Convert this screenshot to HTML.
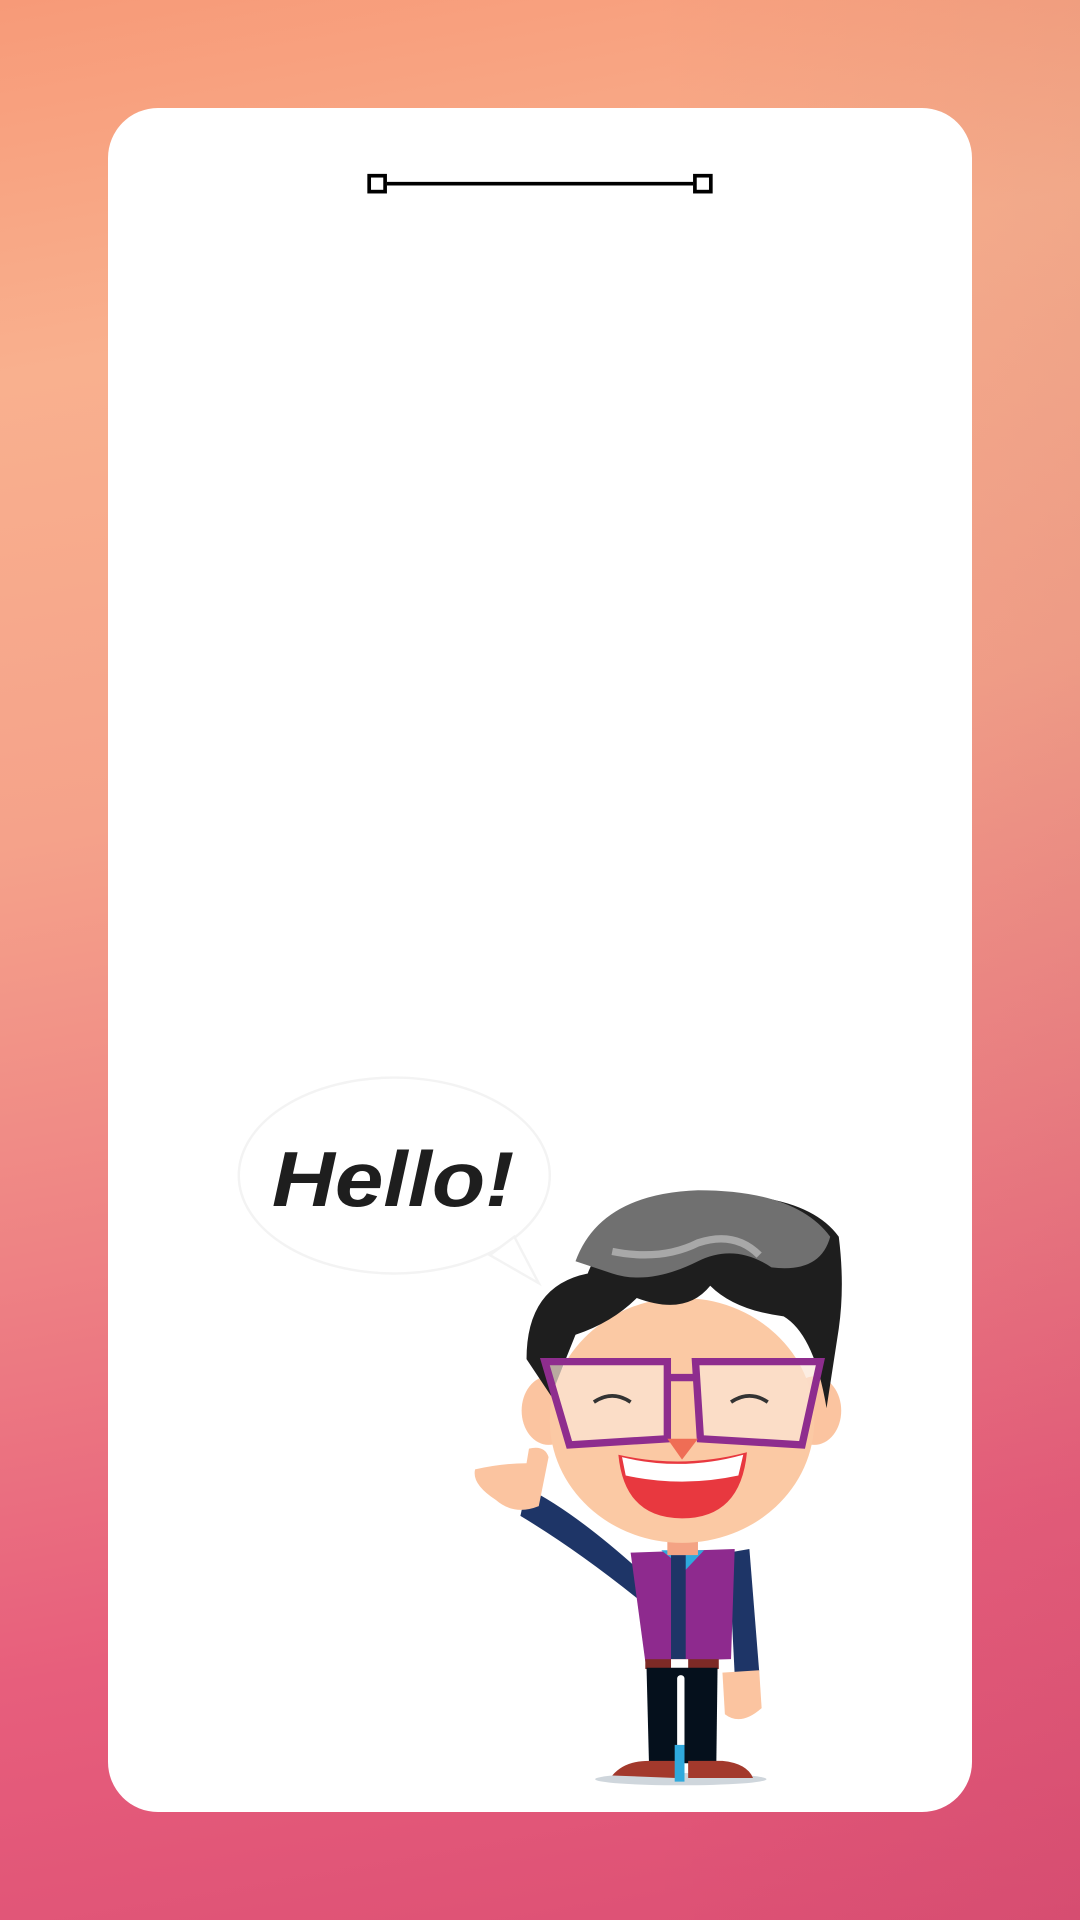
<!DOCTYPE html>
<html><head><meta charset="utf-8"><style>
html,body{margin:0;padding:0;width:1080px;height:1920px;overflow:hidden}
body{background:linear-gradient(170deg,#f79a78 0%,#f9b08e 18%,#f5a28a 40%,#ee8284 60%,#e75e7c 80%,#dc4f74 100%);position:relative;font-family:"Liberation Sans",sans-serif}
body:after{content:"";position:absolute;inset:0;background:linear-gradient(90deg,rgba(0,0,0,0) 60%,rgba(120,40,60,0.06) 100%)}
.card{position:absolute;left:108px;top:108px;width:864px;height:1704px;background:#fff;border-radius:50px;z-index:1}
svg{position:absolute;left:0;top:0;z-index:2}
</style></head><body>
<div class="card"></div>
<svg width="1080" height="1920" viewBox="0 0 882 1568">
<line x1="316" y1="150" x2="566" y2="150" stroke="#000" stroke-width="3"/>
<rect x="301.5" y="143.5" width="13" height="13" fill="#fff" stroke="#000" stroke-width="3"/>
<rect x="567.5" y="143.5" width="13" height="13" fill="#fff" stroke="#000" stroke-width="3"/>
<ellipse cx="322" cy="960" rx="127" ry="80" fill="#fff" stroke="#f3f3f3" stroke-width="2"/>
<path d="M420 1010 L440 1048 L400 1025Z" fill="#fff" stroke="#f3f3f3" stroke-width="2"/>
<text x="222" y="985" font-family="Liberation Sans" font-weight="bold" font-style="italic" font-size="64" fill="#1e1e1e" textLength="198" lengthAdjust="spacingAndGlyphs">Hello!</text>
<ellipse cx="556" cy="1453" rx="70" ry="5" fill="#cfd6dc"/>
<path d="M430 1215 Q470 1235 525 1285 L520 1305 Q470 1265 425 1238Z" fill="#1e3567"/>
<path d="M388 1200 Q410 1195 430 1195 L432 1183 Q445 1180 448 1190 L440 1230 Q420 1238 405 1225 Q385 1212 388 1200Z" fill="#fbc4a0"/>
<path d="M595 1268 L612 1265 L620 1365 L600 1368Z" fill="#1e3567"/>
<path d="M590 1366 L620 1364 L622 1395 Q605 1410 592 1400Z" fill="#fbc4a0"/>
<path d="M515 1268 L600 1265 L597 1355 L527 1357Z" fill="#8e2a8e"/>
<path d="M540 1266 L575 1266 L560 1282Z" fill="#2fa9dd"/>
<rect x="548" y="1270" width="12" height="85" fill="#1e3567"/>
<rect x="527" y="1355" width="60" height="8" fill="#7d2a26"/>
<rect x="548" y="1355" width="14" height="8" fill="#fff"/>
<path d="M528 1362 L586 1362 L585 1440 L530 1440Z" fill="#05101c"/>
<rect x="553" y="1368" width="6" height="70" rx="3" fill="#fff"/>
<path d="M500 1450 Q510 1438 530 1438 L552 1438 L552 1452Z" fill="#a3392c"/>
<path d="M562 1438 L590 1438 Q610 1440 615 1452 L562 1452Z" fill="#a3392c"/>
<rect x="551" y="1425" width="8" height="30" fill="#2fa9dd"/>
<rect x="545" y="1250" width="25" height="20" fill="#f4a384"/>
<ellipse cx="448" cy="1152" rx="22" ry="28" fill="#fbc4a0"/>
<ellipse cx="665" cy="1152" rx="22" ry="28" fill="#fbc4a0"/>
<ellipse cx="557" cy="1160" rx="108" ry="100" fill="#fbc9a4"/>
<path d="M430 1110 Q430 1050 480 1040 Q500 985 580 975 Q660 975 685 1010 Q690 1050 685 1085 L675 1150 Q665 1090 640 1075 Q600 1070 580 1050 Q560 1075 520 1060 Q500 1080 470 1090 L450 1140Z" fill="#1e1e1e"/>
<path d="M470 1030 Q490 975 570 972 Q650 972 678 1010 Q670 1040 630 1035 Q600 1015 570 1030 Q530 1050 500 1040Z" fill="#707070"/>
<path d="M500 1022 Q540 1030 570 1015 Q600 1005 620 1025" stroke="#a8a8a8" stroke-width="6" fill="none"/>
<path d="M445 1112 L545 1112 L545 1175 L465 1180Z M568 1112 L670 1112 L655 1180 L572 1175Z" fill="#fbe5d5" opacity="0.7"/>
<path d="M445 1112 L545 1112 L545 1175 L465 1180Z M568 1112 L670 1112 L655 1180 L572 1175Z M545 1125 L568 1125" fill="none" stroke="#8e2d8e" stroke-width="6"/>
<path d="M485 1145 Q500 1135 515 1145 M597 1145 Q612 1135 627 1145" stroke="#333" stroke-width="3" fill="none"/>
<path d="M545 1175 L570 1175 L557 1192Z" fill="#ef6d55"/>
<path d="M505 1188 Q557 1200 610 1186 Q605 1240 557 1240 Q510 1240 505 1188Z" fill="#e8383f"/>
<path d="M508 1190 Q557 1202 607 1188 L603 1205 Q557 1215 511 1205Z" fill="#fff"/>
</svg>
</body></html>
